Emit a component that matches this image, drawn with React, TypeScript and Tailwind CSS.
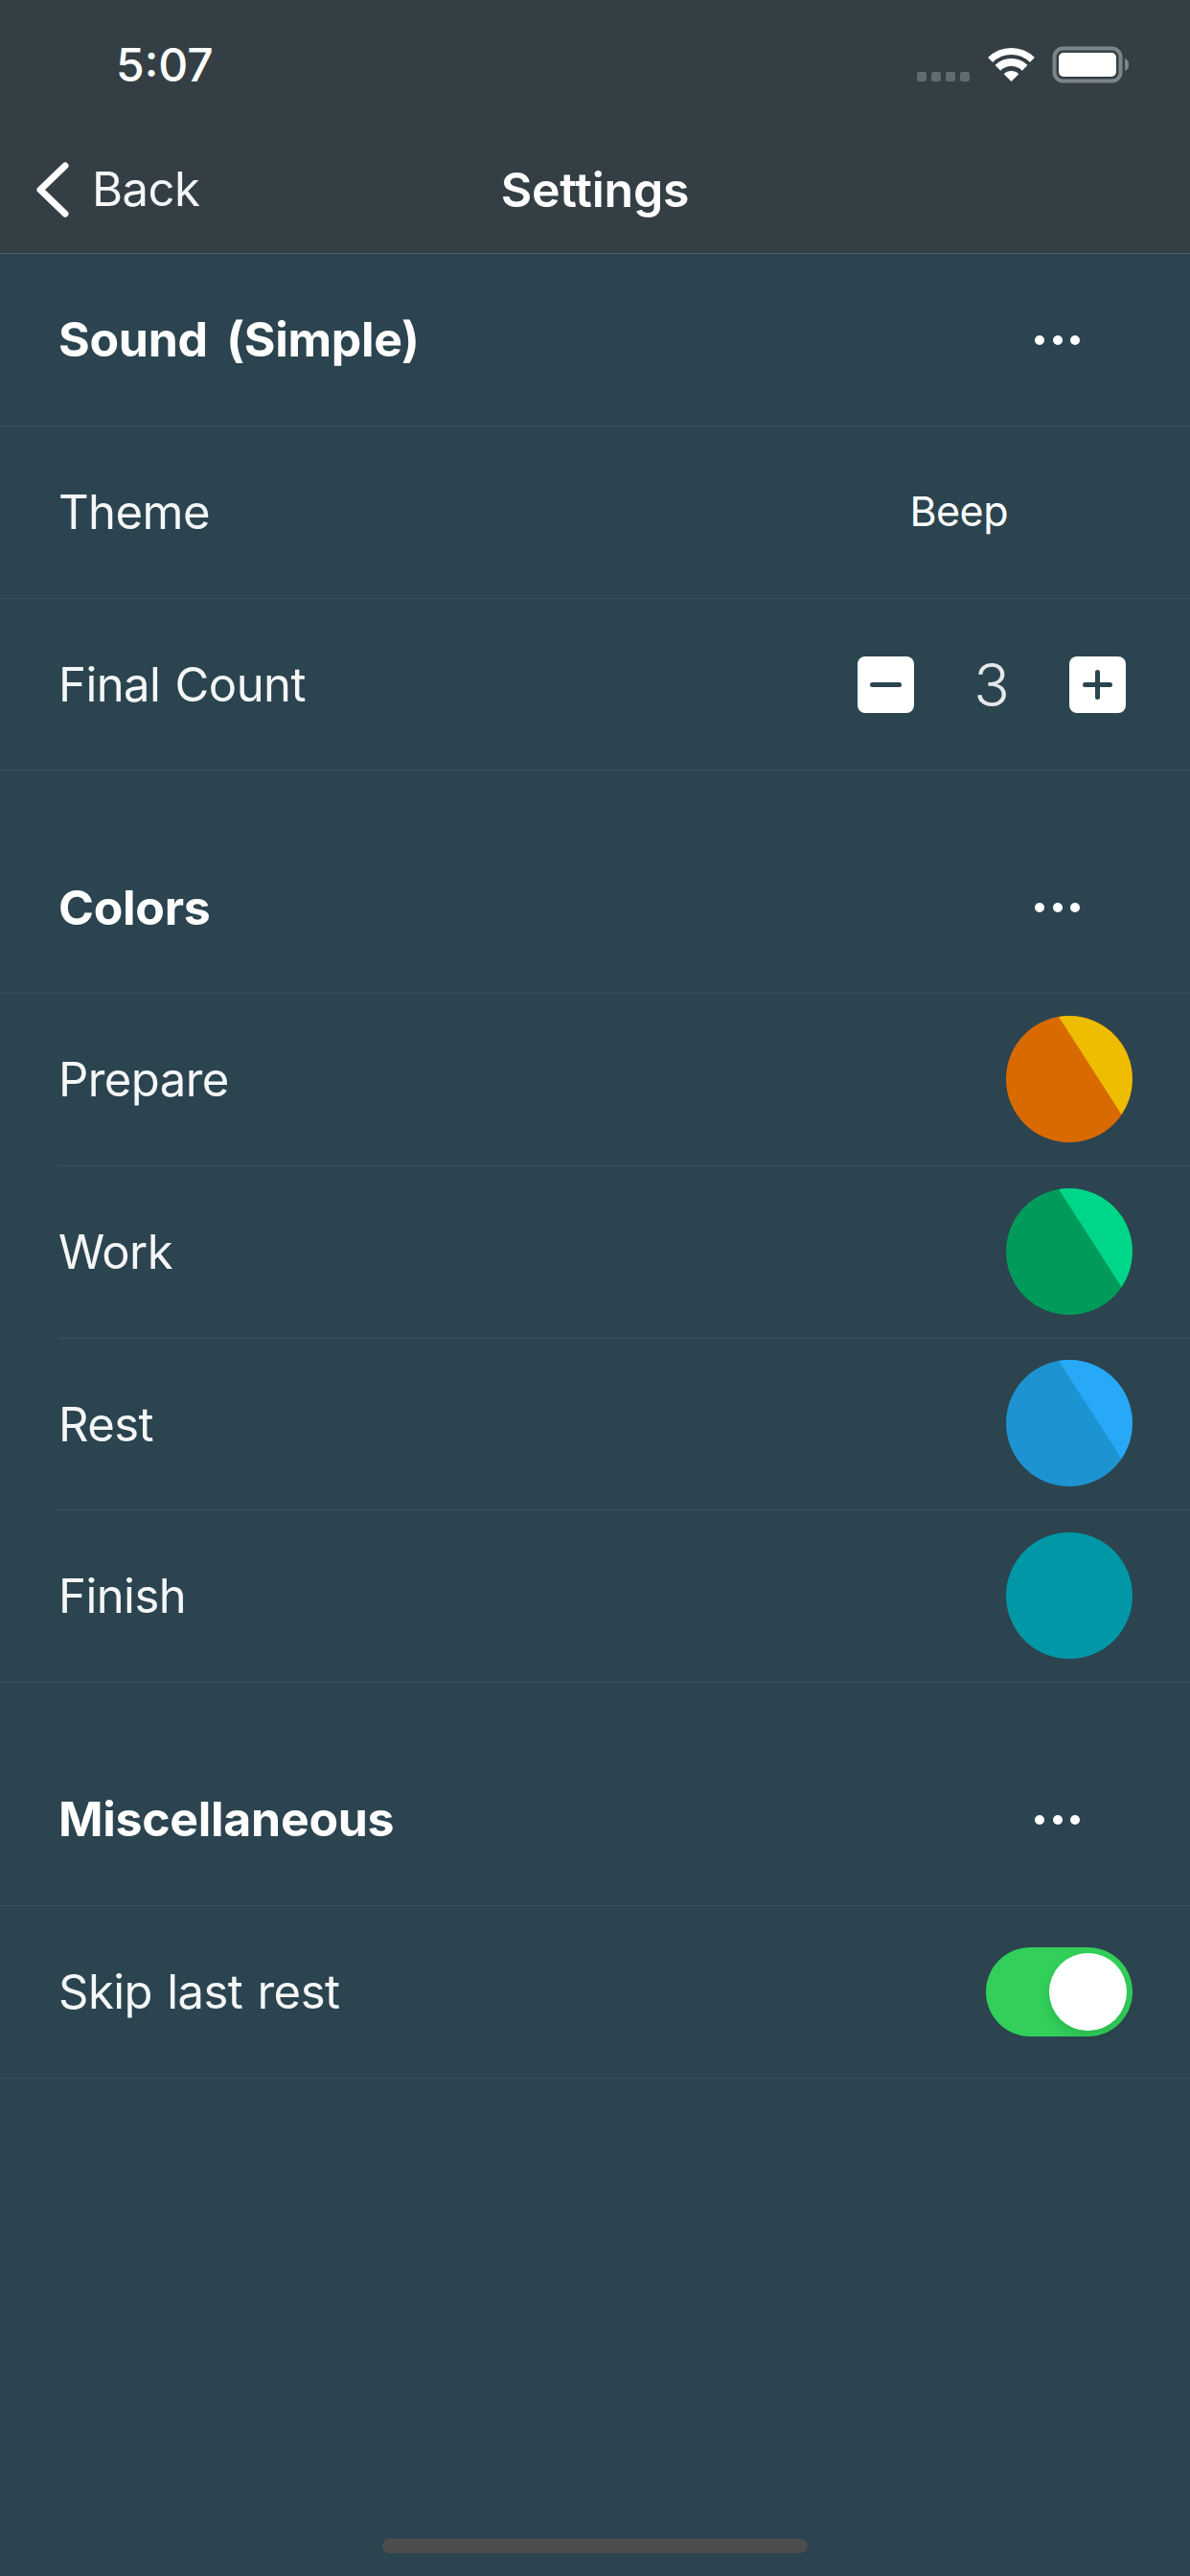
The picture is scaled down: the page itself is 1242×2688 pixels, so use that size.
const FONT = "font-['Inter','Liberation_Sans',sans-serif]";

function Dots() {
  return (
    <div className="flex gap-[8.5px]">
      <div className="w-[10px] h-[10px] rounded-full bg-white" />
      <div className="w-[10px] h-[10px] rounded-full bg-white" />
      <div className="w-[10px] h-[10px] rounded-full bg-white" />
    </div>
  );
}

function StatusIcons() {
  return (
    <svg width="222" height="40" viewBox="957 48 222 40" className="block">
      {[957, 972, 987, 1002].map((x) => (
        <rect key={x} x={x} y="75" width="10" height="10" rx="2.5" fill="#5f6c72" />
      ))}
      <path d="M1033.6 62.6 A31 31 0 0 1 1077.4 62.6" fill="none" stroke="#fff" strokeWidth="7" />
      <path d="M1041.4 70.9 A20 20 0 0 1 1069.6 70.9" fill="none" stroke="#fff" strokeWidth="8" />
      <path d="M1055.5 85 L1047.7 77.2 A11 11 0 0 1 1063.3 77.2 Z" fill="#fff" />
      <rect x="1100.5" y="50.5" width="69" height="34" rx="9" fill="none" stroke="#7c868a" strokeWidth="4" />
      <rect x="1105" y="55" width="60" height="25" rx="5" fill="#fff" />
      <path d="M1174 61 C1177 62 1178 64 1178 67.5 C1178 71 1177 73 1174 74 Z" fill="#7c868a" />
    </svg>
  );
}

function Pie({ base, slice }: { base: string; slice?: string }) {
  return (
    <svg width="132" height="132" viewBox="0 0 132 132" className="block">
      <circle cx="66" cy="66" r="66" fill={base} />
      {slice && <path d="M55 0.9 A66 66 0 0 1 120.5 103 Z" fill={slice} />}
    </svg>
  );
}

function Row({ label, bold, inset, children }: { label: string; bold?: boolean; inset?: boolean; children?: React.ReactNode }) {
  return (
    <div className="h-[179.75px] relative flex items-center justify-between pl-[61px]">
      <span className={bold ? "text-[50px] font-bold text-white tracking-[-0.3px] [word-spacing:8px]" : "text-[49px] font-normal text-[#f4f6f7] tracking-[-0.55px] [word-spacing:2px]"}>{label}</span>
      {children}
      <div className={inset ? "absolute bottom-0 left-[60px] right-0 h-px bg-[#38505c]" : "absolute bottom-0 left-0 right-0 h-px bg-[#38505c]"} />
    </div>
  );
}

function Section({ children }: { children: React.ReactNode }) {
  return <div className="mb-[53px] flex flex-col">{children}</div>;
}

export default function App() {
  return (
    <div className={`${FONT} w-[1242px] h-[2688px] relative bg-[#2b444f] overflow-hidden`}>
      <header className="h-[265px] bg-[#343f45] border-b border-[#47606c] flex flex-col">
        <div className="h-[132px] flex items-center justify-between pl-[121px] pr-[63px] pt-[4px]">
          <span className="text-[48px] font-medium text-white">5:07</span>
          <StatusIcons />
        </div>
        <div className="h-[132px] relative flex items-center justify-center">
          <div className="absolute left-[38px] top-0 h-full flex items-center gap-[24px]">
            <svg width="34" height="58" viewBox="0 0 34 58" className="block">
              <path d="M30 4 L4 29 L30 54" fill="none" stroke="#fff" strokeWidth="7" strokeLinecap="round" strokeLinejoin="round" />
            </svg>
            <span className="text-[49px] font-normal text-[#f4f6f7] tracking-[-0.55px]">Back</span>
          </div>
          <span className="text-[50px] font-semibold text-white tracking-[-0.2px]">Settings</span>
        </div>
      </header>

      <Section>
        <Row label="Sound (Simple)" bold>
          <div className="pr-[115px]"><Dots /></div>
        </Row>
        <Row label="Theme">
          <span className="pr-[190px] pb-[2px] text-[43px] font-normal text-white tracking-[-0.5px]">Beep</span>
        </Row>
        <Row label="Final Count">
          <div className="flex items-center pr-[67px]">
            <button className="w-[59px] h-[59px] rounded-[8px] bg-white flex items-center justify-center">
              <span className="block w-[33px] h-[5px] rounded-full bg-[#2b444f]" />
            </button>
            <span className="w-[162px] text-center text-[62px] font-light text-[#e6e8ea]">3</span>
            <button className="w-[59px] h-[59px] rounded-[8px] bg-white flex items-center justify-center relative">
              <span className="block w-[31px] h-[5px] rounded-full bg-[#2b444f]" />
              <span className="absolute w-[5px] h-[31px] rounded-full bg-[#2b444f]" />
            </button>
          </div>
        </Row>
      </Section>

      <Section>
        <Row label="Colors" bold>
          <div className="pr-[115px]"><Dots /></div>
        </Row>
        <Row label="Prepare" inset>
          <div className="pr-[60px] pb-[2px]"><Pie base="#d96a00" slice="#eebd00" /></div>
        </Row>
        <Row label="Work" inset>
          <div className="pr-[60px] pb-[2px]"><Pie base="#009a5a" slice="#00d68a" /></div>
        </Row>
        <Row label="Rest" inset>
          <div className="pr-[60px] pb-[2px]"><Pie base="#1e93d1" slice="#27a9f8" /></div>
        </Row>
        <Row label="Finish">
          <div className="pr-[60px] pb-[2px]"><Pie base="#0097a7" /></div>
        </Row>
      </Section>

      <Section>
        <Row label="Miscellaneous" bold>
          <div className="pr-[115px]"><Dots /></div>
        </Row>
        <Row label="Skip last rest">
          <div className="mr-[60px] w-[153px] h-[93px] rounded-full bg-[#32d05a] relative">
            <div className="absolute right-[6px] top-[6px] w-[81px] h-[81px] rounded-full bg-white shadow-[0_6px_12px_rgba(0,0,0,0.12)]" />
          </div>
        </Row>
      </Section>

      <div className="absolute left-[399px] top-[2649px] w-[444px] h-[15px] rounded-full bg-[#4d4d4d]" />
    </div>
  );
}
